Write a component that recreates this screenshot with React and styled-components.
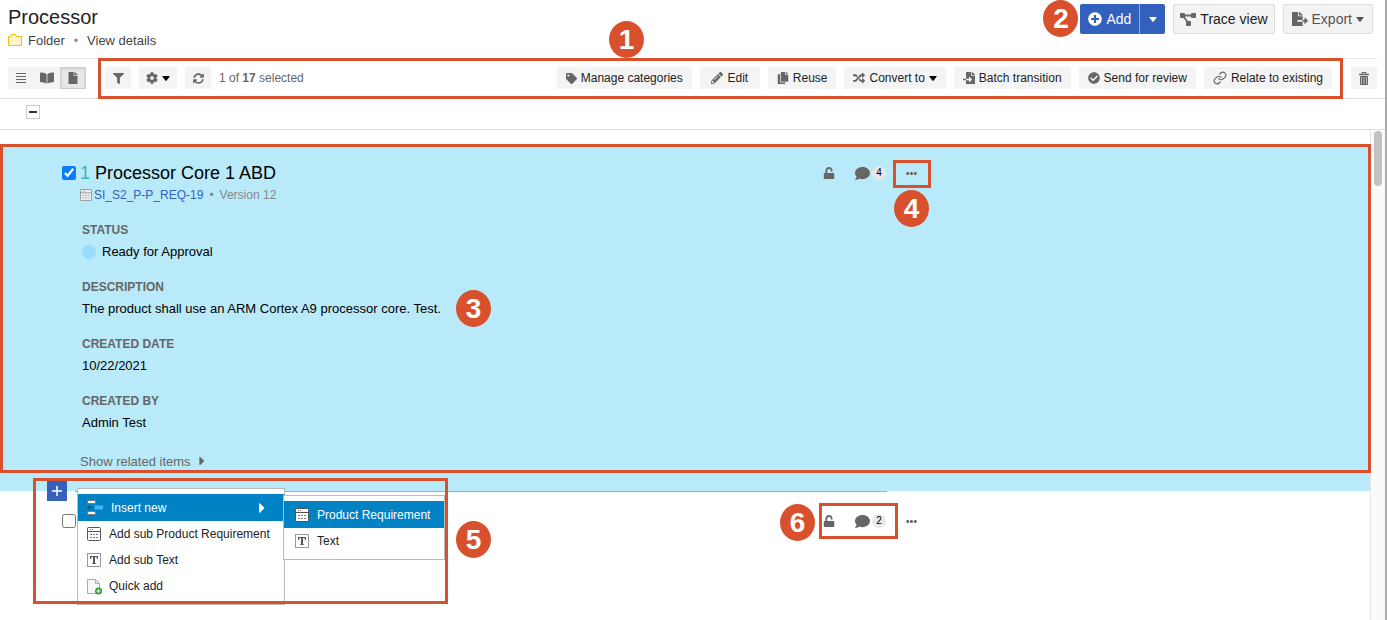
import React from "react";
import styled, { createGlobalStyle, css } from "styled-components";
import { Link } from "lucide-react";
import {
	FaBookOpen,
	FaCaretRight,
	FaCheckCircle,
	FaCog,
	FaComment,
	FaCopy,
	FaEllipsisH,
	FaFile,
	FaFileExport,
	FaFileImport,
	FaFilter,
	FaPencilAlt,
	FaPlusCircle,
	FaRandom,
	FaSyncAlt,
	FaTag,
	FaUnlock,
} from "react-icons/fa";

const RequirementIcon = ({ stroke = "#555", fill = "#fff" }) => (
	<svg width='14' height='14' viewBox='0 0 14 14' fill='none' stroke={stroke}>
		<rect x='0.5' y='0.5' width='13' height='13' rx='1' fill={fill} />
		<path d='M1 4.5h12' />
		<path
			d='M3 2.5h1M5 2.5h1M3 7.5h2M6 7.5h2M9 7.5h2M3 10.5h2M6 10.5h2M9 10.5h2'
			strokeOpacity='0.8'
		/>
	</svg>
);

const TextIcon = () => (
	<svg width='14' height='14' viewBox='0 0 14 14'>
		<rect x='0.5' y='0.5' width='13' height='13' fill='#fff' stroke='#999' />
		<path d='M3 3h8v3h-1l-.5-2H8v6l1 .5v.5H5v-.5l1-.5V4H4.5L4 6H3z' fill='#555' />
	</svg>
);

const InsertIcon = () => (
	<svg width='16' height='15' viewBox='0 0 16 15'>
		<rect x='0.5' y='0.5' width='8' height='3' fill='#fff' stroke='#7a7a7a' />
		<rect x='0.5' y='11.5' width='8' height='3' fill='#fff' stroke='#7a7a7a' />
		<rect x='7.500' y='5.500' width='9' height='4' fill='#3fb4ff' />
		<path d='M0 7.500l3-2.500v2h4v1H3v2z' fill='#444' />
	</svg>
);

const QuickAddIcon = () => (
	<svg width='14' height='15' viewBox='0 0 14 15' overflow='visible'>
		<path d='M.5.5h8l4 4v10H.5z' fill='#f4f7fb' stroke='#aaa' />
		<path d='M8.500.5v4h4' fill='none' stroke='#aaa' />
		<circle cx='11.500' cy='12' r='3.500' fill='#2fa32f' />
		<path d='M11.500 10v4M9.500 12h4' stroke='#fff' />
	</svg>
);

const FolderIcon = () => (
	<svg width='14' height='12' viewBox='0 0 14 12'>
		<path d='M.5 2.500h2l1-2h4l1 2h5v9H.5z' fill='#fff4cf' stroke='#f8bd00' />
	</svg>
);

const TrashIcon = () => (
	<svg width='10' height='13' viewBox='0 0 10 13' fill='none' stroke='#666'>
		<path d='M0 2.500h10' strokeWidth='1.500' />
		<path d='M3 2V.5h4V2' />
		<path d='M1.500 4.500h7v8h-7z' fill='#bbb' />
		<path d='M3.500 5v7M5 5v7M6.500 5v7' />
	</svg>
);

const LinesIcon = () => (
	<svg width='10' height='10' viewBox='0 0 10 10' stroke='#666'>
		<path d='M0 .5h10M0 3.500h10M0 6.500h10M0 9.500h10' />
	</svg>
);

const TraceIcon = () => (
	<svg width='16' height='13' viewBox='0 0 16 13' fill='#666'>
		<rect width='5' height='5' rx='1' />
		<rect x='11' width='5' height='5' rx='1' />
		<rect x='6' y='8' width='5' height='5' rx='1' />
		<path d='M4 2.500h8M3.500 3.500l4.500 6' stroke='#666' strokeWidth='1.800' />
	</svg>
);

const CaretIcon = ({ color = "#000" }) => (
	<svg width='8' height='5' viewBox='0 0 8 5'>
		<path d='M.8 0h6.400q.8 0 .3.700L4.600 4.600q-.6.600-1.200 0L.5.700Q0 0 .8 0z' fill={color} />
	</svg>
);

const PlusIcon = () => (
	<svg width='10' height='10' viewBox='0 0 10 10' stroke='#fff' strokeWidth='1.500'>
		<path d='M5 0v10M0 5h10' />
	</svg>
);

const Frame = ({ box, label, x, y }) => (
	<Outline $box={box}>
		<Marker $x={x} $y={y}>
			{label}
		</Marker>
	</Outline>
);

const ItemActions = ({ comments, children }) => (
	<Actions>
		<IconButton aria-label='Unlock'>
			<FaUnlock size={12} />
		</IconButton>
		<CommentButton aria-label={`${comments} comments`}>
			<FaComment size={15} />
			<Count>{comments}</Count>
		</CommentButton>
		<IconButton aria-label='More actions'>
			<FaEllipsisH size={11} />
		</IconButton>
		{children}
	</Actions>
);

const fields = [
	{ name: "Status", value: "Ready for Approval", dot: "#98dcff" },
	{ name: "Description", value: "The product shall use an ARM Cortex A9 processor core. Test." },
	{ name: "Created date", value: "10/22/2021" },
	{ name: "Created by", value: "Admin Test" },
];

const batchActions = [
	{ label: "Manage categories", icon: <FaTag size={11} /> },
	{ label: "Edit", icon: <FaPencilAlt size={12} /> },
	{ label: "Reuse", icon: <FaCopy size={12} /> },
	{ label: "Convert to", icon: <FaRandom size={12} />, caret: true },
	{ label: "Batch transition", icon: <FaFileImport size={12} /> },
	{ label: "Send for review", icon: <FaCheckCircle size={12} /> },
	{ label: "Relate to existing", icon: <Link size={14} /> },
];

const App = () => (
	<Window>
		<GlobalStyle />
		<Header>
			<div>
				<Title>Processor</Title>
				<Crumbs>
					<FolderIcon />
					<span>Folder</span>
					<Bullet $wide>•</Bullet>
					<CrumbLink href='#details'>View details</CrumbLink>
				</Crumbs>
			</div>
			<HeaderActions>
				<SplitButton>
					<AddButton>
						<FaPlusCircle size={14} />
						Add
					</AddButton>
					<AddMenuButton aria-label='Add options'>
						<CaretIcon color='#fff' />
					</AddMenuButton>
					<Marker $x={-37} $y={-4}>
						2
					</Marker>
				</SplitButton>
				<HeaderButton>
					<TraceIcon />
					Trace view
				</HeaderButton>
				<HeaderButton $muted>
					<FaFileExport size={16} />
					Export
					<CaretIcon color='#555' />
				</HeaderButton>
			</HeaderActions>
		</Header>

		<Toolbar>
			<ViewSwitch>
				<ViewButton aria-label='List view'>
					<LinesIcon />
				</ViewButton>
				<ViewButton aria-label='Reading view'>
					<FaBookOpen size={14} />
				</ViewButton>
				<ViewButton aria-label='Document view' $active>
					<FaFile size={12} />
				</ViewButton>
			</ViewSwitch>
			<ToolGroup>
				<ToolButton aria-label='Filter'>
					<FaFilter size={11} />
				</ToolButton>
				<ToolButton aria-label='Settings'>
					<FaCog size={12} />
					<CaretIcon />
				</ToolButton>
				<ToolButton aria-label='Refresh'>
					<FaSyncAlt size={11} />
				</ToolButton>
			</ToolGroup>
			<Selection>
				1 of <b>17</b> selected
			</Selection>
			<BatchGroup>
				{batchActions.map(({ label, icon, caret }) => (
					<BatchButton key={label}>
						{icon}
						{label}
						{caret && <CaretIcon />}
					</BatchButton>
				))}
			</BatchGroup>
			<ToolButton aria-label='Delete'>
				<TrashIcon />
			</ToolButton>
			<Frame box='0 42px -1px 98px' label='1' x={508} y={-40} />
		</Toolbar>

		<SelectRow>
			<CollapseButton aria-label='Deselect all' />
		</SelectRow>

		<ListArea>
			<List>
				<Item $selected>
					<ItemHead>
						<Checkbox type='checkbox' id='item-1' defaultChecked />
						<ItemTitle htmlFor='item-1'>
							<Number>1</Number> Processor Core 1 ABD
						</ItemTitle>
						<ItemActions comments={4}>
							<Frame box='0 -14px -2px auto' label='4' x={-2} y={27} />
						</ItemActions>
					</ItemHead>
					<Meta>
						<RequirementIcon stroke='#8a8a8a' fill='#eee' />
						<ItemLink href='#item'>SI_S2_P-P_REQ-19</ItemLink>
						<Bullet>•</Bullet>
						<span>Version 12</span>
					</Meta>
					<Fields>
						{fields.map(({ name, value, dot }) => (
							<div key={name}>
								<FieldName>{name}</FieldName>
								<FieldValue>
									{dot && <Dot $color={dot} />}
									{value}
								</FieldValue>
							</div>
						))}
					</Fields>
					<RelatedButton>
						Show related items
						<FaCaretRight size={14} />
					</RelatedButton>
					<Frame box='0 -1px 18px 0' label='3' x={453} y={143} />
				</Item>

				<Item>
					<InsertLine />
					<ItemHead>
						<Checkbox type='checkbox' aria-label='Item 2' />
						<ItemActions comments={2}>
							<Frame box='-5px 19px -5px -4px' label='6' x={-42} y={-2} />
						</ItemActions>
					</ItemHead>

					<InsertButton aria-label='Insert item'>
						<PlusIcon />
					</InsertButton>
					<Menu>
						<MenuItem $active>
							<InsertIcon />
							<MenuLabel>Insert new</MenuLabel>
							<FaCaretRight size={16} />
						</MenuItem>
						<MenuItem>
							<RequirementIcon />
							Add sub Product Requirement
						</MenuItem>
						<MenuItem>
							<TextIcon />
							Add sub Text
						</MenuItem>
						<MenuItem>
							<QuickAddIcon />
							Quick add
						</MenuItem>
						<SubMenu>
							<MenuItem $active>
								<RequirementIcon />
								Product Requirement
							</MenuItem>
							<MenuItem>
								<TextIcon />
								Text
							</MenuItem>
						</SubMenu>
					</Menu>
					<MenuFrame>
						<Marker $x={420} $y={40}>
							5
						</Marker>
					</MenuFrame>
				</Item>
			</List>
			<ScrollTrack>
				<ScrollThumb />
			</ScrollTrack>
		</ListArea>
	</Window>
);

export default App;

const GlobalStyle = createGlobalStyle`
	* {
		box-sizing: border-box;
	}

	body {
		margin: 0;
		background: #fff;
		color: #222;
		font-family: "Liberation Sans", Arial, sans-serif;
		font-size: 12px;
	}

	button {
		font: inherit;
		color: inherit;
		border: 0;
		padding: 0;
		background: none;
		cursor: pointer;
	}

	svg {
		flex-shrink: 0;
	}
`;

const Window = styled.div`
	display: flex;
	flex-direction: column;
	height: 100vh;
	overflow: hidden;
	border-right: 2px solid #aaa;
`;

const Header = styled.header`
	display: flex;
	justify-content: space-between;
	align-items: flex-start;
	padding: 4px 12px 8px 8px;
`;

const Title = styled.h1`
	margin: 0;
	font-size: 20px;
	line-height: 26px;
	font-weight: 400;
`;

const Crumbs = styled.div`
	display: flex;
	align-items: center;
	margin-top: 2px;
	font-size: 13px;
	line-height: 18px;
	color: #444;

	svg {
		margin: 0 6px 2px 0;
	}
`;

const Bullet = styled.span`
	margin: 0 ${({ $wide }) => ($wide ? "9px" : "6px")};
	font-size: 12px;
	color: #888;
`;

const CrumbLink = styled.a`
	color: #444;
	text-decoration: none;
`;

const HeaderActions = styled.div`
	display: flex;
	gap: 8px;
`;

const SplitButton = styled.div`
	position: relative;
	display: flex;
	height: 30px;
	font-size: 14px;
	color: #fff;
`;

const AddButton = styled.button`
	display: flex;
	align-items: center;
	gap: 4px;
	padding: 0 8px;
	background: #335fbd;
	border-radius: 2px 0 0 2px;
`;

const AddMenuButton = styled.button`
	display: flex;
	align-items: center;
	justify-content: center;
	width: 26px;
	background: #335fbd;
	border-left: 1px solid #8fa9dc;
	border-radius: 0 2px 2px 0;
`;

const HeaderButton = styled.button`
	display: flex;
	align-items: center;
	gap: 4px;
	height: 30px;
	padding: 0 6px;
	font-size: 14px;
	color: ${({ $muted }) => ($muted ? "#555" : "#222")};
	background: #f3f3f3;
	border: 1px solid #ddd;
	border-radius: 2px;

	${({ $muted }) =>
		$muted &&
		css`
			padding: 0 8px;
		`}

	svg {
		color: #666;
	}
`;

const Toolbar = styled.div`
	position: relative;
	display: flex;
	align-items: center;
	height: 41px;
	padding: 0 8px;
	border-bottom: 1px solid #ddd;

	&::before {
		content: "";
		position: absolute;
		inset: 0 8px auto;
		height: 1px;
		background: #e6e6e6;
	}
`;

const ViewSwitch = styled.div`
	display: flex;
	margin-right: 19px;
	background: #f4f4f4;
	border-radius: 2px;
`;

const ViewButton = styled.button`
	display: flex;
	align-items: center;
	justify-content: center;
	width: 26px;
	height: 22px;
	color: #666;

	${({ $active }) =>
		$active &&
		css`
			background: #e8e8e8;
			border: 1px solid #ccc;
			box-shadow: inset 0 1px 3px #ccc;
		`}
`;

const ToolGroup = styled.div`
	display: flex;
	gap: 8px;
`;

const ToolButton = styled.button`
	display: flex;
	align-items: center;
	justify-content: center;
	gap: 4px;
	min-width: 26px;
	height: 22px;
	padding: 0 7px;
	white-space: nowrap;
	background: #f4f4f4;
	border-radius: 2px;

	svg {
		color: #666;
	}
`;

const BatchButton = styled(ToolButton)`
	min-width: 60px;
	padding: 0 9px;
`;

const Selection = styled.span`
	margin-left: 8px;
	color: #666;
`;

const BatchGroup = styled(ToolGroup)`
	margin: 0 19px 0 auto;
`;

const SelectRow = styled.div`
	display: flex;
	height: 31px;
	padding: 6px 26px;
	border-bottom: 1px solid #ddd;
`;

const CollapseButton = styled.button`
	display: flex;
	align-items: center;
	justify-content: center;
	width: 14px;
	height: 14px;
	border: 1px solid #ccc;

	&::before {
		content: "";
		width: 8px;
		height: 2px;
		background: #333;
	}
`;

const ListArea = styled.div`
	display: flex;
	flex: 1;
	min-height: 0;
`;

const List = styled.main`
	flex: 1;
	padding-top: 14px;
`;

const ScrollTrack = styled.div`
	width: 15px;
	padding: 1px 3px;
	background: #fafafa;
	border-left: 1px solid #e6e6e6;
`;

const ScrollThumb = styled.div`
	width: 8px;
	height: 55px;
	background: #c1c1c1;
	border-radius: 4px;
`;

const Item = styled.section`
	position: relative;
	padding: ${({ $selected }) => ($selected ? "16px" : "17px")} 0 20px 62px;
	background: ${({ $selected }) => ($selected ? "#b9eaf9" : "#fff")};
`;

const ItemHead = styled.div`
	display: flex;
	align-items: center;
	justify-content: space-between;
	max-width: 855px;
	height: 26px;
`;

const Checkbox = styled.input`
	width: 14px;
	height: 14px;
	margin: 0 4px 0 0;
	accent-color: #0a7aff;
`;

const ItemTitle = styled.label`
	flex: 1;
	font-size: 18px;
	color: #000;
`;

const Number = styled.span`
	color: #2fb9b9;
`;

const Actions = styled.div`
	position: relative;
	display: flex;
	align-items: center;
	gap: 20px;
	height: 26px;
	color: #666;
`;

const IconButton = styled.button`
	display: flex;
`;

const CommentButton = styled.button`
	display: flex;
	align-items: center;
	gap: 2px;
`;

const Count = styled.span`
	width: 14px;
	height: 14px;
	font-size: 10px;
	line-height: 14px;
	color: #000;
	background: #e8e8e8;
	border-radius: 50%;
`;

const Meta = styled.div`
	display: flex;
	align-items: center;
	height: 18px;
	padding-left: 18px;
	color: #888;

	svg {
		width: 12px;
		height: 12px;
		margin-right: 2px;
	}
`;

const ItemLink = styled.a`
	color: #3560bb;
	text-decoration: none;
`;

const Fields = styled.div`
	display: flex;
	flex-direction: column;
	gap: 14px;
	padding: 16px 0 0 20px;
`;

const FieldName = styled.div`
	font-weight: 700;
	line-height: 20px;
	color: #666;
	text-transform: uppercase;
`;

const FieldValue = styled.div`
	display: flex;
	align-items: center;
	gap: 6px;
	font-size: 13px;
	line-height: 23px;
	color: #000;
`;

const Dot = styled.span`
	width: 14px;
	height: 14px;
	background: ${({ $color }) => $color};
	border-radius: 50%;
`;

const RelatedButton = styled.button`
	display: flex;
	align-items: center;
	gap: 4px;
	height: 20px;
	margin: 17px 0 0 18px;
	font-size: 13px;
	color: #666;
`;

const InsertLine = styled.div`
	position: absolute;
	top: 0;
	left: 75px;
	width: 812px;
	height: 1px;
	background: #8fb0dd;
`;

const InsertButton = styled.button`
	position: absolute;
	top: -10px;
	left: 47px;
	display: flex;
	align-items: center;
	justify-content: center;
	width: 20px;
	height: 20px;
	color: #fff;
	background: #3560bb;
`;

const Menu = styled.div`
	position: absolute;
	top: -3px;
	left: 77px;
	width: 208px;
	padding: 5px 0;
	background: #fff;
	border: 1px solid #bbb;
`;

const SubMenu = styled(Menu)`
	top: 6px;
	left: 205px;
	width: 162px;

	button {
		padding-left: 11px;
	}
`;

const MenuItem = styled.button`
	display: flex;
	align-items: center;
	gap: 8px;
	width: 100%;
	height: ${({ $active }) => ($active ? "27px" : "26px")};
	padding: 0 14px 0 9px;
	white-space: nowrap;
	color: ${({ $active }) => ($active ? "#fff" : "#222")};
	background: ${({ $active }) => ($active ? "#0082c4" : "transparent")};
`;

const MenuLabel = styled.span`
	flex: 1;
	text-align: left;
`;

/* Numbered callouts laid over the page */
const Outline = styled.div`
	position: absolute;
	inset: ${({ $box }) => $box};
	min-width: 38px;
	border: 3px solid #d9512c;
	pointer-events: none;
`;

const MenuFrame = styled(Outline)`
	top: -13px;
	left: 33px;
	width: 415px;
	height: 126px;
`;

const Marker = styled.span`
	position: absolute;
	top: ${({ $y }) => $y}px;
	left: ${({ $x }) => $x}px;
	display: flex;
	align-items: center;
	justify-content: center;
	width: 35px;
	height: 37px;
	font-size: 28px;
	font-weight: 700;
	color: #fff;
	background: #d9512c;
	border-radius: 50%;
`;
